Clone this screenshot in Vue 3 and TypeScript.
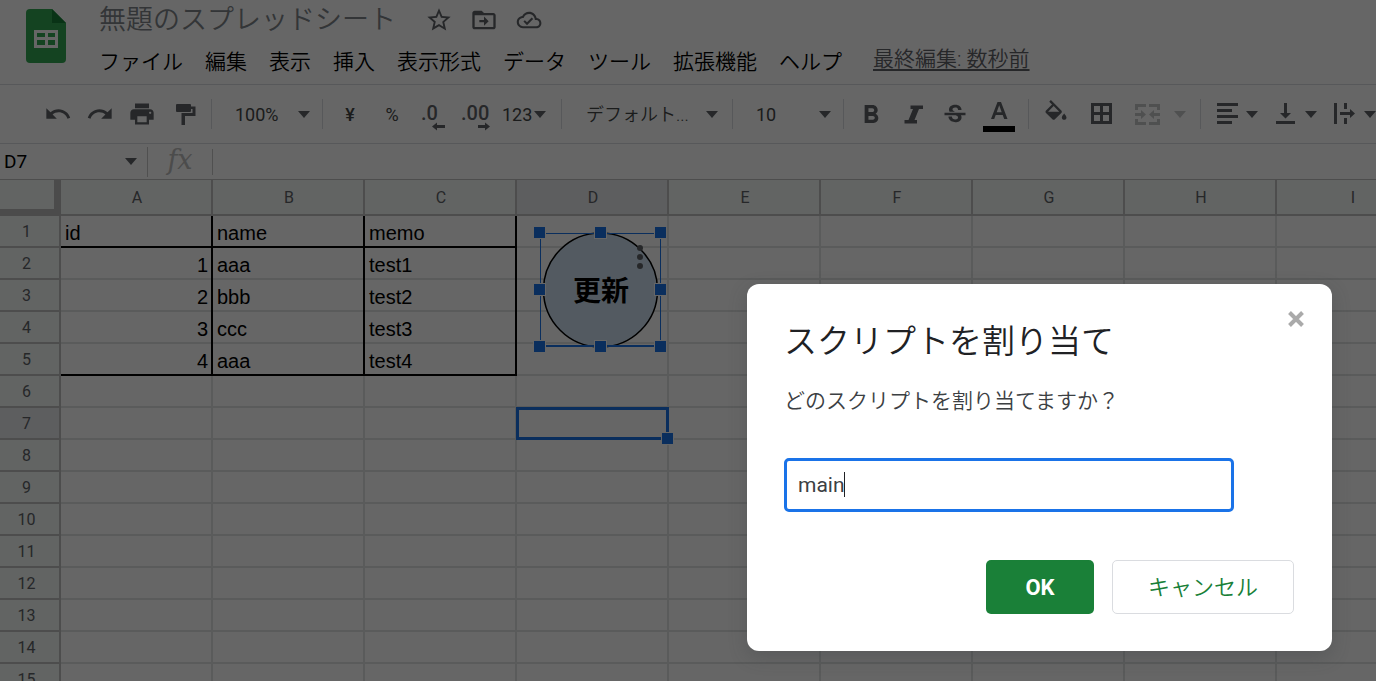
<script setup lang="ts">
import { ref } from 'vue'

const menus: string[] = ['ファイル', '編集', '表示', '挿入', '表示形式', 'データ', 'ツール', '拡張機能', 'ヘルプ']
const columns: string[] = ['A', 'B', 'C', 'D', 'E', 'F', 'G', 'H', 'I']
const records: string[][] = [
  ['id', 'name', 'memo'],
  ['1', 'aaa', 'test1'],
  ['2', 'bbb', 'test2'],
  ['3', 'ccc', 'test3'],
  ['4', 'aaa', 'test4'],
]
const rowCount = 15
const activeColumn = 3
const activeRow = 7

const handles: { x: number; y: number }[] = [
  { x: 1, y: 1 }, { x: 62, y: 1 }, { x: 122, y: 1 },
  { x: 1, y: 58 }, { x: 122, y: 58 },
  { x: 1, y: 115 }, { x: 62, y: 115 }, { x: 122, y: 115 },
]

const scriptName = ref('main')
const cellName = ref('D7')
const formula = ref('')
const zoomLevel = ref('100%')
const fontName = ref('デフォルト...')
const fontSize = ref('10')

function cellText(row: number, col: number): string {
  return records[row - 1]?.[col] ?? ''
}

function cellClass(row: number, col: number) {
  const inTable = row <= 5 && col < 3
  return {
    ruled: inTable,
    underlined: inTable && (row === 1 || row === 5),
    number: inTable && col === 0 && row > 1,
    active: row === activeRow && col === activeColumn,
  }
}
</script>

<template>
  <div class="app">
    <header class="header">
      <svg class="logo" viewBox="0 0 40 54" aria-hidden="true">
        <path d="M4 0h22l14 14v36a4 4 0 0 1-4 4H4a4 4 0 0 1-4-4V4a4 4 0 0 1 4-4z" fill="#34a853" />
        <path d="M26 0l14 14H26z" fill="#188038" />
        <path d="M8 21h24v18H8zM11 24v4h8v-4zM22 24v4h7v-4zM11 31v5h8v-5zM22 31v5h7v-5z" fill="#fff" fill-rule="evenodd" />
      </svg>
      <div class="heading">
        <div class="title-row">
          <h1 class="doc-title">無題のスプレッドシート</h1>
          <button class="plain" aria-label="スター">
            <svg class="icon" viewBox="0 0 24 24"><path d="M22 9.24l-7.19-.62L12 2 9.19 8.63 2 9.24l5.46 4.73L5.82 21 12 17.27 18.18 21l-1.63-7.03L22 9.24zM12 15.4l-3.76 2.27 1-4.28-3.32-2.88 4.38-.38L12 6.1l1.71 4.04 4.38.38-3.32 2.88 1 4.28L12 15.4z" /></svg>
          </button>
          <button class="plain" aria-label="移動">
            <svg class="icon" viewBox="0 0 24 24"><path d="M20 6h-8l-2-2H4c-1.1 0-2 .9-2 2v12c0 1.1.9 2 2 2h16c1.1 0 2-.9 2-2V8c0-1.1-.9-2-2-2zm0 12H4V8h16v10zm-8-1l4-4-4-4v3H8v2h4v3z" /></svg>
          </button>
          <button class="plain" aria-label="保存状態">
            <svg class="icon" viewBox="0 0 24 24"><path d="M19.35 10.04C18.67 6.59 15.64 4 12 4 9.11 4 6.6 5.64 5.35 8.04 2.34 8.36 0 10.91 0 14c0 3.31 2.69 6 6 6h13c2.76 0 5-2.24 5-5 0-2.64-2.05-4.78-4.65-4.96zM19 18H6c-2.21 0-4-1.79-4-4 0-2.05 1.53-3.76 3.56-3.97l1.07-.11.5-.95C8.08 7.14 9.94 6 12 6c2.62 0 4.88 1.86 5.39 4.43l.3 1.5 1.53.11c1.56.1 2.78 1.41 2.78 2.96 0 1.65-1.35 3-3 3zm-9-3.82l-2.09-2.09L6.5 13.5 10 17l6.01-6.01-1.41-1.41z" transform="translate(1.5 1.5) scale(.88)" /></svg>
          </button>
        </div>
        <nav class="menu-row">
          <button v-for="m in menus" :key="m" class="menu">{{ m }}</button>
          <a href="#" class="last-edit">最終編集: 数秒前</a>
        </nav>
      </div>
    </header>

    <div class="toolbar" role="toolbar">
      <button class="tool" aria-label="元に戻す">
        <svg class="icon" viewBox="0 0 24 24"><path d="M12.5 8c-2.65 0-5.05.99-6.9 2.6L2 7v9h9l-3.62-3.62c1.39-1.16 3.16-1.88 5.12-1.88 3.54 0 6.55 2.31 7.6 5.5l2.37-.78C21.08 11.03 17.15 8 12.5 8z" /></svg>
      </button>
      <button class="tool" aria-label="やり直し">
        <svg class="icon" viewBox="0 0 24 24"><path d="M18.4 10.6C16.55 8.99 14.15 8 11.5 8c-4.65 0-8.58 3.03-9.96 7.22L3.9 16c1.05-3.19 4.05-5.5 7.6-5.5 1.95 0 3.73.72 5.12 1.88L13 16h9V7l-3.6 3.6z" /></svg>
      </button>
      <button class="tool" aria-label="印刷">
        <svg class="icon" viewBox="0 0 24 24"><path d="M19 8H5c-1.66 0-3 1.34-3 3v6h4v4h12v-4h4v-6c0-1.66-1.34-3-3-3zm-3 11H8v-5h8v5zm3-7c-.55 0-1-.45-1-1s.45-1 1-1 1 .45 1 1-.45 1-1 1zm-1-9H6v4h12V3z" /></svg>
      </button>
      <button class="tool" aria-label="書式を貼り付け">
        <svg class="icon" viewBox="0 0 28 28"><path d="M7 4h13a1 1 0 0 1 1 1v1.500h4.500V16H15v9h-3.500V13h11V9H21v2a1 1 0 0 1-1 1H7a1 1 0 0 1-1-1V5a1 1 0 0 1 1-1z" /></svg>
      </button>
      <span class="sep"></span>

      <label class="drop zoom">
        <select v-model="zoomLevel" aria-label="ズーム"><option>100%</option></select>
        <svg class="caret" viewBox="0 0 12 7"><path d="M0 0h12L6 7z" /></svg>
      </label>
      <span class="sep"></span>

      <button class="tool yen">¥</button>
      <button class="tool percent">%</button>
      <button class="tool" aria-label="小数点以下の桁数を減らす">
        <svg class="decimal" viewBox="0 0 42 36"><text x="8" y="24">.0</text><path d="M19 30.500l5-4v2.500h8v3h-8v2.500z" /></svg>
      </button>
      <button class="tool" aria-label="小数点以下の桁数を増やす">
        <svg class="decimal" viewBox="0 0 42 36"><text x="6" y="24">.00</text><path d="M35 30.500l-5-4v2.500h-7v3h7v2.500z" /></svg>
      </button>
      <button class="format">123<svg class="caret" viewBox="0 0 12 7"><path d="M0 0h12L6 7z" /></svg></button>
      <span class="sep"></span>

      <label class="drop font">
        <select v-model="fontName" aria-label="フォント"><option>デフォルト...</option></select>
        <svg class="caret" viewBox="0 0 12 7"><path d="M0 0h12L6 7z" /></svg>
      </label>
      <span class="sep"></span>
      <label class="drop size">
        <select v-model="fontSize" aria-label="フォントサイズ"><option>10</option></select>
        <svg class="caret" viewBox="0 0 12 7"><path d="M0 0h12L6 7z" /></svg>
      </label>
      <span class="sep"></span>

      <button class="tool" aria-label="太字">
        <svg class="icon" viewBox="1 0 22 22"><path d="M15.6 10.79c.97-.67 1.65-1.77 1.65-2.79 0-2.26-1.75-4-4-4H7v14h7.04c2.09 0 3.71-1.7 3.71-3.79 0-1.52-.86-2.82-2.15-3.42zM10 6.5h3c.83 0 1.5.67 1.5 1.5s-.67 1.5-1.5 1.5h-3v-3zm3.5 9H10v-3h3.5c.83 0 1.5.67 1.5 1.5s-.67 1.5-1.5 1.5z" /></svg>
      </button>
      <button class="tool" aria-label="斜体">
        <svg class="icon" viewBox="0 0 28 28"><path d="M11.500 5.500h12.500v3.500h-4l-4.500 11h2.500v3.500H5.500V20h4L14 9h-2.500z" /></svg>
      </button>
      <button class="tool" aria-label="取り消し線">
        <svg class="icon" viewBox="0 -1 24 24"><path d="M6.85 7.08C6.85 4.37 9.45 3 12.24 3c1.64 0 3 .49 3.9 1.28.77.65 1.46 1.73 1.46 3.24h-3.01c0-.31-.05-.59-.15-.85-.29-.86-1.2-1.28-2.25-1.28-1.86 0-2.34 1.02-2.34 1.7 0 .48.25.88.74 1.21.38.25.77.48 1.41.7H7.39c-.21-.34-.54-.89-.54-1.92zM21 12v-2H3v2h9.62c1.15.45 1.96.75 1.96 1.97 0 1-.81 1.67-2.28 1.67-1.54 0-2.93-.54-2.93-2.51H6.4c0 .55.08 1.13.24 1.58.81 2.29 3.29 3.3 5.67 3.3 2.27 0 5.3-.89 5.3-4.05 0-.3-.01-1.16-.48-1.94H21V12z" /></svg>
      </button>
      <button class="tool text-color" aria-label="テキストの色">
        <svg viewBox="0 0 46 36"><path d="M21.500 6h3.500l6.500 17h-3.300l-1.500-4h-7l-1.500 4H15zM20.700 16.200h5L23.200 9.300z" /><path d="M7 30h32v6H7z" fill="#000" /></svg>
      </button>
      <span class="sep"></span>

      <button class="tool" aria-label="塗りつぶしの色">
        <svg class="icon" viewBox="0 0 24 24"><path d="M16.56 8.94L7.62 0 6.21 1.41l2.38 2.38-5.15 5.15c-.59.59-.59 1.54 0 2.12l5.5 5.5c.29.29.68.44 1.06.44s.77-.15 1.06-.44l5.5-5.5c.59-.58.59-1.53 0-2.12zM5.21 10L10 5.21 14.79 10H5.21zM19 11.5s-2 2.17-2 3.5c0 1.1.9 2 2 2s2-.9 2-2c0-1.33-2-3.5-2-3.5z" /></svg>
      </button>
      <button class="tool borders" aria-label="枠線">
        <svg class="icon" viewBox="0 0 28 28"><path d="M4 3h21v21H4zM7 6v6h6V6zM16 6v6h6V6zM7 15v6h6v-6zM16 15v6h6v-6z" fill-rule="evenodd" /></svg>
      </button>
      <button class="tool merge" aria-label="セルを結合" disabled>
        <svg class="icon" viewBox="0 0 28 28"><path d="M2 4h11v3H5v3H2zM16 4h11v6h-3V7h-8zM2 19h3v3h8v3H2zM24 19h3v6H16v-3h8zM2 13h6v-3l5 4.500L8 19v-3H2zM27 13h-6v-3l-5 4.500 5 4.500v-3h6z" /></svg>
        <svg class="caret" viewBox="0 0 12 7"><path d="M0 0h12L6 7z" /></svg>
      </button>
      <span class="sep"></span>

      <button class="tool combo" aria-label="水平方向の配置">
        <svg class="icon" viewBox="0 0 28 28"><path d="M4 3h21v3H4zM4 9h15v3H4zM4 15h21v3H4zM4 21h15v3H4z" /></svg>
        <svg class="caret" viewBox="0 0 12 7"><path d="M0 0h12L6 7z" /></svg>
      </button>
      <button class="tool combo" aria-label="垂直方向の配置">
        <svg class="icon" viewBox="0 0 28 28"><path d="M4 21h19v3H4zM12 3h3v10h4l-5.500 5.500L8 13h4z" /></svg>
        <svg class="caret" viewBox="0 0 12 7"><path d="M0 0h12L6 7z" /></svg>
      </button>
      <button class="tool combo" aria-label="テキストの折り返し">
        <svg class="icon" viewBox="0 0 28 28"><path d="M3 3h3v21H3zM13 3h3v6h-3zM13 18h3v6h-3zM9 12h10V9l5 4.500-5 4.500v-3H9z" /></svg>
        <svg class="caret" viewBox="0 0 12 7"><path d="M0 0h12L6 7z" /></svg>
      </button>
    </div>

    <div class="formula-bar">
      <label class="name-box">
        <input v-model="cellName" aria-label="名前ボックス" />
        <svg class="caret" viewBox="0 0 12 7"><path d="M0 0h12L6 7z" /></svg>
      </label>
      <label class="fx" for="formula">fx</label>
      <input id="formula" v-model="formula" class="formula" />
    </div>

    <main class="sheet">
      <table class="grid">
        <thead>
          <tr>
            <th class="corner"></th>
            <th v-for="(c, i) in columns" :key="c" :class="{ selected: i === activeColumn }" scope="col">{{ c }}</th>
          </tr>
        </thead>
        <tbody>
          <tr v-for="r in rowCount" :key="r">
            <th :class="{ selected: r === activeRow }" scope="row">{{ r }}</th>
            <td v-for="(c, i) in columns" :key="c" :class="cellClass(r, i)">{{ cellText(r, i) }}<i v-if="r === activeRow && i === activeColumn" class="cell-cursor"></i></td>
          </tr>
        </tbody>
      </table>

      <svg class="drawing" viewBox="0 0 135 127" role="img" aria-label="更新">
        <circle cx="67.500" cy="64" r="57" fill="#cfe2f3" stroke="#000" stroke-width="1.500" />
        <text x="68" y="75" text-anchor="middle">更新</text>
        <g fill="#5f6368">
          <circle cx="107" cy="22" r="3" /><circle cx="107" cy="31" r="3" /><circle cx="107" cy="40" r="3" />
        </g>
        <path d="M7.500 120V7.500h120V120" fill="none" stroke="#1a73e8" />
        <path d="M7 120h121" stroke="#1a73e8" stroke-width="2" />
        <rect v-for="(h, i) in handles" :key="i" :x="h.x - 0.5" :y="h.y - 0.5" width="12" height="12" fill="#1a73e8" stroke="#fff" />
      </svg>
    </main>

    <div class="scrim">
      <form class="dialog" role="dialog" aria-labelledby="dialog-title" @submit.prevent>
        <button type="button" class="close" aria-label="閉じる">
          <svg viewBox="0 0 18 18"><path d="M2.500 2.500l13 13M15.500 2.500l-13 13" fill="none" stroke="#aaa" stroke-width="4" /></svg>
        </button>
        <h2 id="dialog-title">スクリプトを割り当て</h2>
        <label class="question" for="script-name">どのスクリプトを割り当てますか？</label>
        <div class="field">
          <input id="script-name" v-model="scriptName" autocomplete="off" />
          <span class="text-caret"></span>
        </div>
        <div class="actions">
          <button type="submit" class="ok">OK</button>
          <button type="button" class="cancel">キャンセル</button>
        </div>
      </form>
    </div>
  </div>
</template>

<style>
body {
  margin: 0;
  overflow: hidden;
}
</style>

<style scoped>
.app {
  position: relative;
  display: flex;
  flex-direction: column;
  height: 100vh;
  overflow: hidden;
  background: #fff;
  color: #444746;
  font-family: Roboto, "Noto Sans CJK JP", sans-serif;
}
.app * {
  box-sizing: border-box;
}
button,
select,
input {
  margin: 0;
  padding: 0;
  border: 0;
  background: none;
  color: inherit;
  font: inherit;
  outline: none;
}
svg {
  display: block;
  flex: none;
  fill: #5f6368;
}
.icon {
  width: 28px;
  height: 28px;
}
.caret {
  width: 12px;
  height: 7px;
}

/* Title and menus */
.header {
  flex: none;
  display: flex;
  gap: 33px;
  height: 85px;
  padding: 0 26px;
  border-bottom: 1px solid #dadce0;
}
.logo {
  width: 40px;
  height: 54px;
  margin-top: 9px;
}
.title-row {
  display: flex;
  align-items: center;
  gap: 17px;
  height: 40px;
}
.doc-title {
  margin: 0 12px 0 0;
  color: #80868b;
  font-size: 27px;
  font-weight: 350;
  line-height: 40px;
}
.menu-row {
  display: flex;
  align-items: center;
  gap: 22px;
  height: 44px;
  white-space: nowrap;
}
.menu {
  color: #000;
  font-size: 21px;
  font-weight: 350;
  line-height: 32px;
}
.last-edit {
  margin: 0 0 6px 9px;
  color: #5f6368;
  font-size: 21px;
  font-weight: 350;
  line-height: 32px;
  text-underline-offset: 3px;
}

/* Toolbar */
.toolbar {
  flex: none;
  display: flex;
  align-items: center;
  height: 59px;
  padding-left: 37px;
  border-bottom: 1px solid #dadce0;
  font-size: 18px;
}
.tool {
  flex: none;
  display: flex;
  align-items: center;
  justify-content: center;
  width: 42px;
  height: 36px;
}
.yen {
  font-weight: 500;
}
.sep {
  flex: none;
  width: 1px;
  height: 30px;
  margin: 0 6px;
  background: #dadce0;
}
.drop {
  flex: none;
  display: grid;
  align-items: center;
  height: 36px;
}
.drop > * {
  grid-area: 1 / 1;
}
.drop select {
  appearance: none;
  width: 100%;
  height: 36px;
  padding-left: 17px;
}
.drop .caret {
  justify-self: end;
  margin-right: 6px;
  pointer-events: none;
}
.zoom,
.size {
  width: 98px;
}
.font {
  width: 158px;
}
.font select {
  padding-left: 18px;
  font-weight: 350;
}
.font .caret {
  margin-right: 8px;
}
.decimal {
  width: 42px;
  height: 36px;
  font-size: 20px;
  font-weight: 500;
}
.format {
  flex: none;
  display: flex;
  align-items: center;
  gap: 2px;
  width: 58px;
  padding-left: 5px;
}
.text-color {
  width: 46px;
}
.text-color svg {
  width: 46px;
  height: 36px;
}
.borders {
  width: 48px;
}
.merge {
  justify-content: flex-start;
  gap: 13px;
  width: 69px;
  padding-left: 8px;
  opacity: 0.35;
}
.combo {
  justify-content: flex-start;
  gap: 5px;
  width: 59px;
  padding-left: 6px;
}

/* Formula bar */
.formula-bar {
  flex: none;
  display: flex;
  align-items: center;
  height: 36px;
  border-bottom: 1px solid #c0c0c0;
}
.name-box {
  display: flex;
  align-items: center;
  width: 148px;
  height: 30px;
  padding: 0 10px 0 4px;
  border-right: 1px solid #c8c8c8;
}
.name-box input {
  flex: 1;
  min-width: 0;
  color: #000;
  font-size: 19px;
}
.fx {
  width: 65px;
  height: 26px;
  border-right: 1px solid #c8c8c8;
  color: #bdbdbd;
  font: italic 27px/22px "DejaVu Serif", serif;
  text-align: center;
}
.formula {
  flex: 1;
  height: 30px;
  padding-left: 8px;
}

/* Sheet */
.sheet {
  position: relative;
  flex: 1;
  min-height: 0;
  overflow: hidden;
}
.grid {
  width: 1429px;
  border-spacing: 0;
  table-layout: fixed;
}
.grid th {
  height: 32px;
  padding: 2px 0 0 2px;
  border: solid #c0c0c0;
  border-width: 0 2px 2px 0;
  background: #f5faf7;
  color: #5f6368;
  font-size: 16px;
  font-weight: 400;
  line-height: 20px;
}
.grid thead th {
  width: 152px;
  height: 36px;
}
.grid thead .corner {
  width: 61px;
  border-width: 0 7px 7px 0;
  border-color: #bcbcbc;
}
.grid tbody th {
  padding-right: 8px;
}
.grid th.selected {
  background: #e8eaed;
}
.grid td {
  position: relative;
  height: 32px;
  padding: 0 3px 1px 4px;
  border: solid #e2e3e3;
  border-width: 0 2px 2px 0;
  color: #000;
  font: 20px/24px "Liberation Sans", Arial, sans-serif;
  vertical-align: bottom;
}
.grid td.ruled::after {
  content: "";
  position: absolute;
  inset: 0 -2px -2px auto;
  width: 2px;
  background: #000;
}
.grid td.underlined {
  border-bottom-color: #000;
}
.grid td.number {
  text-align: right;
}
.cell-cursor {
  position: absolute;
  z-index: 1;
  inset: -1px -2px -2px -1px;
  border: 3px solid #1a73e8;
}
.cell-cursor::after {
  content: "";
  position: absolute;
  right: -8px;
  bottom: -8px;
  width: 11px;
  height: 11px;
  border: 1px solid #fff;
  background: #1a73e8;
}
.grid td.active {
  z-index: 1;
}
.drawing {
  position: absolute;
  top: 46px;
  left: 533px;
  width: 135px;
  height: 127px;
}
.drawing text {
  fill: #000;
  font: 700 28px "Noto Sans CJK JP", sans-serif;
}

/* Dialog */
.scrim {
  position: absolute;
  z-index: 2;
  inset: 0;
  background: rgba(0, 0, 0, 0.6);
}
.dialog {
  position: absolute;
  top: 284px;
  right: 44px;
  display: flex;
  flex-direction: column;
  width: 585px;
  padding: 37px 38px 37px 37px;
  border-radius: 12px;
  background: #fff;
  box-shadow: 0 6px 18px rgba(60, 64, 67, 0.3);
}
.close {
  position: absolute;
  top: 26px;
  right: 27px;
}
.close svg {
  width: 18px;
  height: 18px;
}
.dialog h2 {
  margin: 0;
  color: #202124;
  font-size: 33px;
  font-weight: 350;
  line-height: 42px;
}
.question {
  margin-top: 22px;
  color: #3c4043;
  font-size: 21px;
  font-weight: 350;
  line-height: 32px;
}
.field {
  position: relative;
  width: 450px;
  margin-top: 41px;
}
.field input {
  display: block;
  width: 100%;
  height: 54px;
  padding: 0 11px;
  border: 3px solid #1a73e8;
  border-radius: 5px;
  color: #3c4043;
  font-size: 21px;
}
.text-caret {
  position: absolute;
  top: 14px;
  left: 60px;
  width: 1px;
  height: 25px;
  background: #202124;
}
.actions {
  display: flex;
  justify-content: flex-end;
  gap: 18px;
  margin-top: 48px;
}
.actions button {
  height: 54px;
  border-radius: 5px;
  font-size: 22px;
}
.actions .ok {
  width: 108px;
  background: #1a8038;
  color: #fff;
  font-weight: 700;
}
.actions .cancel {
  width: 182px;
  padding-bottom: 4px;
  border: 1px solid #dadce0;
  color: #188038;
  font-weight: 350;
}
</style>
